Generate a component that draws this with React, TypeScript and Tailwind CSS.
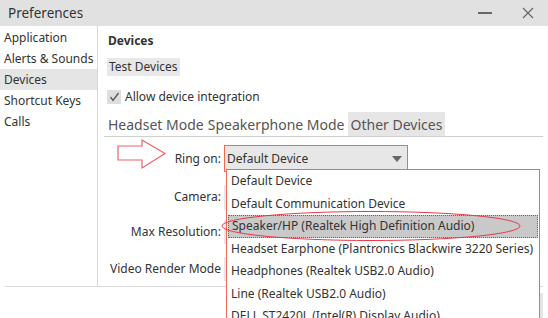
import React from "react";

const font = { fontFamily: '"Noto Sans", "Open Sans", sans-serif' };

export default function App() {
  const items = [
    "Default Device",
    "Default Communication Device",
    "Speaker/HP (Realtek High Definition Audio)",
    "Headset Earphone (Plantronics Blackwire 3220 Series)",
    "Headphones (Realtek USB2.0 Audio)",
    "Line (Realtek USB2.0 Audio)",
    "DELL ST2420L (Intel(R) Display Audio)",
  ];
  return (
    <div className="relative w-[548px] h-[318px] overflow-hidden bg-white text-[#333]" style={font}>
      {/* title bar */}
      <div className="flex h-[26px] items-center bg-[#e1e1e1] pl-[8px] pr-[14px]">
        <span className="text-[13.5px] text-[#333]">Preferences</span>
        <div className="ml-auto flex items-center gap-[30px]">
          <div className="h-[1.5px] w-[14px] bg-[#666]" />
          <svg width="12" height="12" viewBox="0 0 12 12">
            <path d="M1 1 L11 11 M11 1 L1 11" stroke="#666" strokeWidth="1.2" />
          </svg>
        </div>
      </div>
      {/* body */}
      <div className="ml-[5px] mr-[5px] flex h-[261px] border-b border-[#d9d9d9]">
        <div className="w-[93px] -ml-[5px] pl-[4px] pt-[1px] border-r border-[#d9d9d9] text-[12px] box-content whitespace-nowrap">
          <div className="h-[21px] leading-[21px]">Application</div>
          <div className="h-[21px] leading-[21px]">Alerts &amp; Sounds</div>
          <div className="h-[21px] leading-[21px] bg-[#e5e5e5] -ml-[4px] pl-[4px]">Devices</div>
          <div className="h-[21px] leading-[21px]">Shortcut Keys</div>
          <div className="h-[21px] leading-[21px]">Calls</div>
        </div>
        <div className="flex-1 pl-[6px]">
          <div className="pl-[4px] pt-[6px] text-[12px] font-bold leading-[18px]">Devices</div>
          <div className="mt-[8px] ml-[3px] inline-block h-[18px] bg-[#e8e8e8] px-[2px] text-[12px] leading-[18px]">Test Devices</div>
          <div className="mt-[12px] ml-[3px] flex items-center gap-[4px] text-[12px] leading-[16px]">
            <div className="flex h-[14px] w-[14px] items-center justify-center bg-[#dedede]">
              <svg width="11" height="10" viewBox="0 0 11 10">
                <path d="M1.5 5 L4 8.5 L9.5 1" fill="none" stroke="#555" strokeWidth="1.3" />
              </svg>
            </div>
            <span>Allow device integration</span>
          </div>
          <div className="mt-[7px] flex h-[25px] items-stretch border-b border-[#cfcfcf] text-[14px] text-[#555]">
            <div className="flex items-center pl-[4px] pr-[4px]">Headset Mode</div>
            <div className="flex items-center pr-[3px]">Speakerphone Mode</div>
            <div className="flex items-center bg-[#e6e6e6] px-[3px]">Other Devices</div>
          </div>
          <div className="mt-[8px] flex flex-col text-[12px]">
            <div className="flex h-[27px] items-center">
              <div className="w-[120px] pr-[3px] text-right">Ring on:</div>
              <div className="flex h-[27px] w-[184px] items-center border-[1.5px] border-[#f26a4b] bg-[#e7e7e7] pl-[2px]">
                <span>Default Device</span>
                <svg className="ml-auto mr-[5px]" width="10" height="6" viewBox="0 0 10 6">
                  <path d="M0 0 L10 0 L5 6 Z" fill="#666" />
                </svg>
              </div>
            </div>
            <div className="mt-[13px] flex h-[24px] items-center">
              <div className="w-[120px] pr-[3px] text-right">Camera:</div>
              <div className="h-[24px] w-[184px] bg-[#e7e7e7]" />
            </div>
            <div className="mt-[11px] flex h-[24px] items-center">
              <div className="w-[120px] pr-[3px] text-right">Max Resolution:</div>
              <div className="h-[24px] w-[184px] bg-[#e7e7e7]" />
            </div>
            <div className="mt-[13px] flex h-[24px] items-center">
              <div className="w-[120px] pr-[3px] text-right whitespace-nowrap">Video Render Mode</div>
              <div className="h-[24px] w-[184px] bg-[#e7e7e7]" />
            </div>
          </div>
        </div>
      </div>
      {/* small gray element at right */}
      <div className="absolute left-[540px] top-[293px] h-[30px] w-[3px] bg-[#e6e6e6]" />
      {/* dropdown list */}
      <div className="absolute left-[226px] top-[169px] w-[314px] h-[170px] border-[1.5px] border-[#f26a4b] bg-white text-[12px]">
        {items.map((t, i) => (
          <div
            key={i}
            className={
              i === 2
                ? "h-[22.5px] leading-[20.5px] pl-[3px] mx-[1px] bg-[#c9c9c9] border border-dotted border-[#666] whitespace-nowrap"
                : "h-[22.5px] leading-[22.5px] pl-[4px] whitespace-nowrap"
            }
          >
            {t}
          </div>
        ))}
      </div>
      {/* annotations */}
      <svg className="absolute left-0 top-0 pointer-events-none" width="548" height="318" viewBox="0 0 548 318">
        <path d="M118 146 L142 146 L142 140 L165 153.5 L142 168 L142 160 L118 160 Z" fill="none" stroke="#f0606a" strokeWidth="1.2" />
        <ellipse cx="371" cy="226" rx="149" ry="14.5" fill="none" stroke="#e8394a" strokeWidth="1" />
      </svg>
    </div>
  );
}
